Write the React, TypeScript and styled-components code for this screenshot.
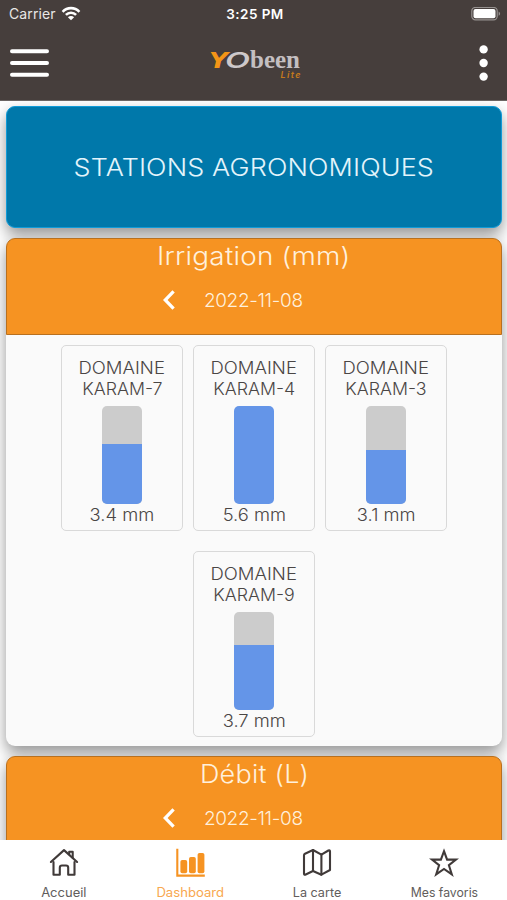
import React from "react";
import styled, { createGlobalStyle } from "styled-components";

const GlobalStyle = createGlobalStyle`
  * { box-sizing: border-box; }
  html, body { margin: 0; padding: 0; }
  body {
    width: 507px;
    height: 900px;
    overflow: hidden;
    background: #fff;
    font-family: Inter, "Open Sans", "Liberation Sans", sans-serif;
    color: #4a4645;
  }
`;

const Screen = styled.div`
  width: 507px;
  height: 900px;
  display: flex;
  flex-direction: column;
  overflow: hidden;
`;

const Header = styled.header`
  flex: none;
  height: 101px;
  background: #463e3c;
  color: #fff;
  border-bottom: 1px solid #6b6563;
`;

const StatusBar = styled.div`
  height: 27px;
  padding: 0 6px 0 9px;
  display: grid;
  grid-template-columns: 1fr auto 1fr;
  align-items: center;
  font-size: 14px;
`;

const Carrier = styled.div`
  display: flex;
  align-items: center;
  gap: 5px;
  color: #e9e7e6;
  letter-spacing: 0.12px;
`;

const Clock = styled.div`
  font-size: 13.5px;
  font-weight: 600;
  letter-spacing: 0.45px;
`;

const BatterySlot = styled.div`
  display: flex;
  justify-content: flex-end;
`;

const NavBar = styled.div`
  height: 72px;
  padding: 0 18px 0 10px;
  display: flex;
  align-items: center;
  justify-content: space-between;
`;

const IconButton = styled.button`
  width: 39px;
  height: 44px;
  padding: 0;
  border: 0;
  background: none;
  display: flex;
  align-items: center;
  svg { flex: none; }
`;

const MoreButton = styled(IconButton)`
  justify-content: flex-end;
`;

const Content = styled.main`
  flex: 1;
  min-height: 0;
  overflow: hidden;
  padding: 5px 5px 0 6px;
  display: flex;
  flex-direction: column;
  gap: 10px;
`;

const cardShadow = "0 7px 15px rgba(0, 0, 0, 0.42)";

const Banner = styled.section`
  flex: none;
  height: 122px;
  border: 1px solid #109bd8;
  border-radius: 9px;
  background: #0078aa;
  box-shadow: ${cardShadow};
  color: #e3f4fb;
  display: flex;
  align-items: center;
  justify-content: center;
`;

const Card = styled.section<{ $height: number }>`
  flex: none;
  height: ${(p) => p.$height}px;
  border-radius: 9px;
  background: #fafafa;
  box-shadow: ${cardShadow};
`;

const CardHeader = styled.header`
  height: 97px;
  border: 1px solid #b8701f;
  border-radius: 9px 9px 0 0;
  background: #f69322;
  color: #fff0dc;
  display: flex;
  flex-direction: column;
  align-items: center;
`;

const CardTitle = styled.h2`
  margin: 0;
  height: 33px;
  display: flex;
  align-items: center;
  font-weight: 300;
`;

const DateRow = styled.div`
  width: 182px;
  height: 56px;
  padding-right: 42px;
  display: flex;
  align-items: center;
  justify-content: space-between;
`;

/* Text run with its own size, weight and horizontal stretch. */
const Label = styled.span<{ $size: number; $track?: number; $weight?: number; $stretch?: number }>`
  display: inline-block;
  font-size: ${(p) => p.$size}px;
  letter-spacing: ${(p) => p.$track ?? 0}px;
  margin-right: ${(p) => -(p.$track ?? 0)}px;
  font-weight: ${(p) => p.$weight ?? 400};
  transform: scaleX(${(p) => p.$stretch ?? 1});
  white-space: nowrap;
`;

const Tiles = styled.div`
  padding: 10px 0 0;
  display: flex;
  flex-wrap: wrap;
  justify-content: center;
  gap: 20px 10px;
  margin: 0 50px;
`;

const Tile = styled.div`
  width: 122px;
  height: 186px;
  border: 1px solid #d9d9d9;
  border-radius: 5px;
  padding-top: 12px;
  display: flex;
  flex-direction: column;
  align-items: center;
`;

const TileLine = styled.div`
  height: 21px;
  line-height: 21px;
`;

const TileValue = styled(TileLine)`
  padding-top: 1px;
`;

const Gauge = styled.div`
  width: 40px;
  height: 98px;
  margin-top: 6px;
  border-radius: 5px;
  background: #ccc;
  overflow: hidden;
  display: flex;
  align-items: flex-end;
`;

const GaugeFill = styled.div`
  width: 100%;
  background: #6495e8;
`;

const TabBar = styled.nav`
  flex: none;
  height: 60px;
  background: #fff;
  display: grid;
  grid-template-columns: repeat(4, 1fr);
`;

const Tab = styled.a<{ $active?: boolean }>`
  color: ${(p) => (p.$active ? "#f69322" : "#403a39")};
  display: flex;
  flex-direction: column;
  align-items: center;
  padding: 8px 0 0 1px;
  gap: 4px;
`;

const TabText = styled.div<{ $active?: boolean }>`
  height: 18px;
  line-height: 18px;
  color: ${(p) => (p.$active ? "#f8a850" : "#625d5c")};
`;

const Wifi = () => (
  <svg width="20" height="16" viewBox="0 0 20 16" fill="none" stroke="#fff" strokeWidth="2.6">
    <path d="M1.6 5.8C6.3 0.9 13.7 0.9 18.4 5.8" />
    <path d="M4.9 8.9C7.8 6 12.2 6 15.1 8.9" />
    <path d="M10 14.3L6.9 11.2C8.7 9.5 11.3 9.5 13.1 11.2Z" fill="#fff" stroke="none" />
  </svg>
);

const Battery = () => (
  <svg width="30" height="14" viewBox="0 0 30 14">
    <rect x="0.8" y="0.4" width="25.4" height="12.4" rx="3.6" fill="none" stroke="#96918f" strokeWidth="1.2" />
    <rect x="2.5" y="2" width="22" height="9.2" rx="2" fill="#fff" />
    <path d="M27.6 4.4C29.6 5.2 29.6 7.8 27.6 8.8Z" fill="#96918f" />
  </svg>
);

const Menu = () => (
  <svg width="39" height="30" viewBox="0 0 39 30" stroke="#fff" strokeWidth="4" strokeLinecap="round">
    <path d="M2 3.3H37M2 15H37M2 26.7H37" />
  </svg>
);

const More = () => (
  <svg width="10" height="38" viewBox="0 0 10 38" fill="#fff">
    <circle cx="4.6" cy="5.4" r="4.2" />
    <circle cx="4.6" cy="19" r="4.2" />
    <circle cx="4.6" cy="32.6" r="4.2" />
  </svg>
);

const Logo = () => (
  <svg width="106" height="36" viewBox="0 0 106 36">
    <text x="12" y="23" fontFamily="DejaVu Sans" fontWeight="700" fontStyle="italic" fontSize="22" fill="#f39517" textLength="19" lengthAdjust="spacingAndGlyphs">Y</text>
    <text x="28" y="23" fontFamily="Inter" fontWeight="600" fontStyle="italic" fontSize="22" fill="#cdc8ca" textLength="25" lengthAdjust="spacingAndGlyphs">O</text>
    <text x="53" y="22.5" fontFamily="Liberation Serif" fontWeight="700" fontSize="24.5" fill="#c4bfc1" textLength="50" lengthAdjust="spacingAndGlyphs">been</text>
    <text x="83.5" y="33" fontFamily="Inter" fontWeight="600" fontStyle="italic" fontSize="9" fill="#c57a1c" textLength="20" lengthAdjust="spacing">Lite</text>
  </svg>
);

const Back = () => (
  <svg width="12" height="20" viewBox="0 0 12 20" fill="none" stroke="#fff" strokeWidth="3.3">
    <path d="M10.6 1.4L2.2 10L10.6 18.6" />
  </svg>
);

const iconProps = {
  width: 30,
  height: 30,
  viewBox: "0 0 30 30",
  fill: "none",
  stroke: "currentColor",
  strokeWidth: 2.1,
  strokeLinejoin: "round" as const,
  strokeLinecap: "round" as const,
};

const Home = () => (
  <svg {...iconProps}>
    <path d="M1.9 14L15 2.1L28.1 14" />
    <path d="M20.2 6.3V3.7H23.7V9.7" />
    <path d="M4.5 14.1V26.7H10.8V19.7Q10.8 17.5 13 17.5H17Q19.2 17.5 19.2 19.7V26.7H25.5V14.1" />
  </svg>
);

const Chart = () => (
  <svg {...iconProps} strokeLinecap="butt" strokeLinejoin="miter">
    <path d="M1.3 0.8V27.6H28.8" />
    <g fill="currentColor" stroke="none">
      <rect x="4.4" y="12" width="6.8" height="13.2" rx="1.8" />
      <rect x="13" y="9" width="6.8" height="16.2" rx="1.8" />
      <rect x="21.6" y="5" width="6.8" height="20.2" rx="1.8" />
    </g>
  </svg>
);

const MapIcon = () => (
  <svg {...iconProps}>
    <path d="M3 5.7L11 2L19.4 6.6L26.4 2.5Q28 1.8 28 3.5V22L19.4 26.7L11 23L3.2 26.7Q2 27 2 25.4V7.2Q2 6.2 3 5.7Z" />
    <path d="M11 2V23M19.4 6.6V26.7" />
  </svg>
);

const Star = () => (
  <svg {...iconProps} strokeLinejoin="miter">
    <path d="M15 3.2L18.1 11.6H27L19.9 17.2L22.8 26.4L15 21L7.2 26.4L10.1 17.2L3 11.6H11.9Z" />
  </svg>
);

const stations = [
  { id: "KARAM-7", value: "3.4 mm", level: 61 },
  { id: "KARAM-4", value: "5.6 mm", level: 100 },
  { id: "KARAM-3", value: "3.1 mm", level: 55.5 },
  { id: "KARAM-9", value: "3.7 mm", level: 66.5 },
];

const tabs = [
  { name: "Accueil", icon: <Home />, stretch: 1.04 },
  { name: "Dashboard", icon: <Chart />, stretch: 1.05, active: true },
  { name: "La carte", icon: <MapIcon />, stretch: 1.01 },
  { name: "Mes favoris", icon: <Star />, stretch: 0.98 },
];

const SectionHeader = ({ title, stretch }: { title: string; stretch: number }) => (
  <CardHeader>
    <CardTitle>
      <Label $size={25} $track={0.2} $weight={350} $stretch={stretch}>{title}</Label>
    </CardTitle>
    <DateRow>
      <Back />
      <Label $size={19} $track={-0.35} $weight={350}>2022-11-08</Label>
    </DateRow>
  </CardHeader>
);

export default function App() {
  return (
    <Screen>
      <GlobalStyle />
      <Header>
        <StatusBar>
          <Carrier>Carrier <Wifi /></Carrier>
          <Clock>3:25 PM</Clock>
          <BatterySlot><Battery /></BatterySlot>
        </StatusBar>
        <NavBar>
          <IconButton aria-label="Menu"><Menu /></IconButton>
          <Logo />
          <MoreButton aria-label="Options"><More /></MoreButton>
        </NavBar>
      </Header>
      <Content>
        <Banner>
          <Label $size={24.5} $track={0.1} $weight={350} $stretch={1.1}>STATIONS AGRONOMIQUES</Label>
        </Banner>
        <Card $height={508}>
          <SectionHeader title="Irrigation (mm)" stretch={1.115} />
          <Tiles>
            {stations.map((s) => (
              <Tile key={s.id}>
                <TileLine><Label $size={17} $weight={350} $stretch={1.09}>DOMAINE</Label></TileLine>
                <TileLine><Label $size={17} $weight={350} $stretch={1.045}>{s.id}</Label></TileLine>
                <Gauge><GaugeFill style={{ height: `${s.level}%` }} /></Gauge>
                <TileValue><Label $size={17} $weight={350} $stretch={1.08}>{s.value}</Label></TileValue>
              </Tile>
            ))}
          </Tiles>
        </Card>
        <Card $height={300}>
          <SectionHeader title="Débit (L)" stretch={1.08} />
        </Card>
      </Content>
      <TabBar>
        {tabs.map((t) => (
          <Tab key={t.name} $active={t.active}>
            {t.icon}
            <TabText $active={t.active}>
              <Label $size={12.5} $stretch={t.stretch}>{t.name}</Label>
            </TabText>
          </Tab>
        ))}
      </TabBar>
    </Screen>
  );
}
